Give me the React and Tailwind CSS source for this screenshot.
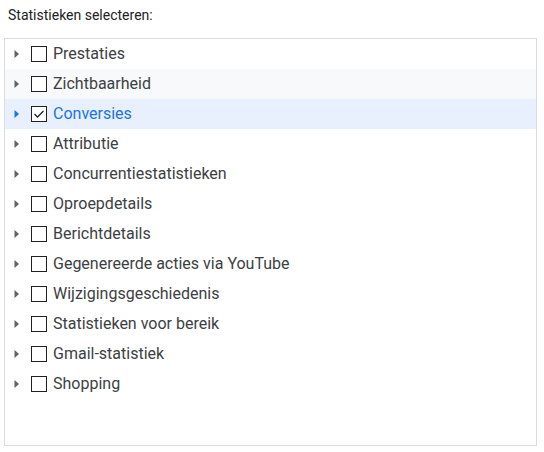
const items = [
  "Prestaties",
  "Zichtbaarheid",
  "Conversies",
  "Attributie",
  "Concurrentiestatistieken",
  "Oproepdetails",
  "Berichtdetails",
  "Gegenereerde acties via YouTube",
  "Wijzigingsgeschiedenis",
  "Statistieken voor bereik",
  "Gmail-statistiek",
  "Shopping",
];

function Row({ label, index }) {
  const checked = label === "Conversies";
  const hover = index === 1;
  return (
    <div
      className={`flex h-[30px] items-center pl-[9px] ${
        checked ? "bg-[#e8f0fe]" : hover ? "bg-[#f8f9fa]" : ""
      }`}
    >
      <svg width="6" height="10" viewBox="0 0 6 10" className="shrink-0">
        <path d="M0.5 1 L5 5 L0.5 9 Z" fill={checked ? "#1a73e8" : "#5f6368"} />
      </svg>
      <div className="ml-[11px] flex h-[16px] w-[16px] shrink-0 items-center justify-center border border-[#202124] bg-white">
        {checked && (
          <svg width="14" height="14" viewBox="0 0 14 14">
            <path d="M2.5 7 L5.5 10 L11.5 4" fill="none" stroke="#202124" strokeWidth="1.3" />
          </svg>
        )}
      </div>
      <span
        className={`ml-[6px] text-[16px] leading-[20px] ${
          checked ? "text-[#1a73e8]" : "text-[#3c4043]"
        }`}
      >
        {label}
      </span>
    </div>
  );
}

export default function App() {
  return (
    <div className="w-[544px] h-[452px] bg-white font-['Roboto',sans-serif]">
      <div className="pl-[8px] pt-[5px] text-[14px] leading-[20px] text-[#202124]">
        Statistieken selecteren:
      </div>
      <div className="ml-[4px] mt-[13px] h-[408px] w-[533px] border border-[#dadce0]">
        {items.map((label, i) => (
          <Row key={label} label={label} index={i} />
        ))}
      </div>
    </div>
  );
}
